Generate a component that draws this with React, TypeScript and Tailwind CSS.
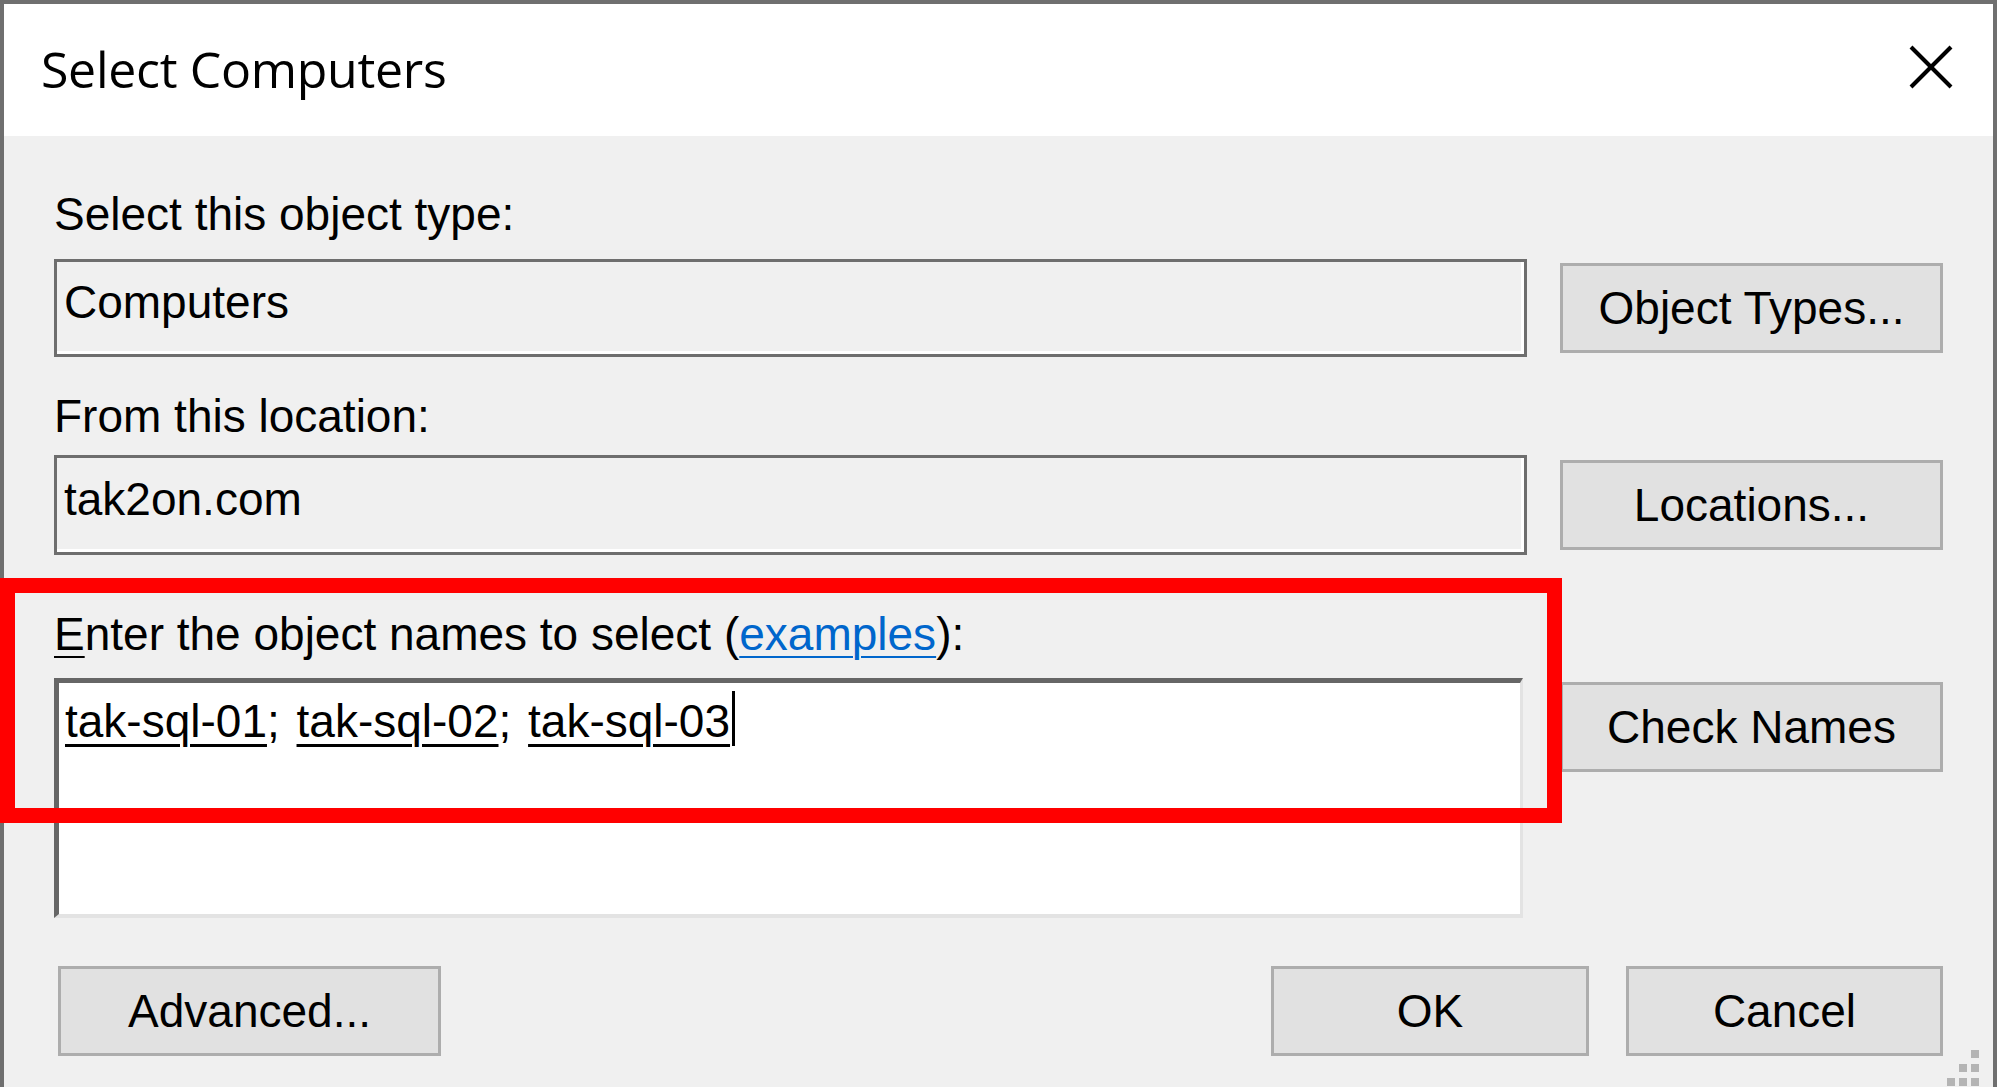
import React from "react";

const body = "font-['Liberation_Sans',Arial,sans-serif] text-[46px] leading-[53px] text-black";

function Btn({ label, className = "" }: { label: string; className?: string }) {
  return (
    <div
      className={`h-[90px] bg-[#e1e1e1] border-[3px] border-[#adadad] flex items-center justify-center ${body} ${className}`}
    >
      <span>{label}</span>
    </div>
  );
}

function SunkenField({ text, pt }: { text: string; pt: string }) {
  return (
    <div className="w-[1473px] border-[3px] border-[#6e6e6e] bg-[#f0f0f0]">
      <div className={`h-full border-r-[3px] border-b-[3px] border-white pl-[7px] ${pt} ${body}`}>
        {text}
      </div>
    </div>
  );
}

export default function App() {
  return (
    <div className="relative w-[2000px] h-[1087px] bg-white overflow-hidden">
      <div className="w-[1997px] h-[1100px] border-l-[4px] border-t-[4px] border-r-[4px] border-[#6f6f6f] flex flex-col">
        {/* Title bar */}
        <div className="h-[132px] bg-white flex items-start shrink-0">
          <div className="pl-[37px] pt-[31px] font-['Open_Sans','Noto_Sans',sans-serif] text-[50px] leading-[68px] tracking-[-0.3px] text-black">
            Select Computers
          </div>
          <div className="ml-auto mr-[40px] mt-[41px]">
            <svg width="44" height="44" viewBox="0 0 44 44">
              <line x1="2" y1="2" x2="42" y2="42" stroke="#000" strokeWidth="4" />
              <line x1="42" y1="2" x2="2" y2="42" stroke="#000" strokeWidth="4" />
            </svg>
          </div>
        </div>

        {/* Body */}
        <div className="flex-1 bg-[#f0f0f0] pl-[50px] pr-[50px] flex flex-col">
          <div className={`mt-[52px] ${body}`}>Select this object type:</div>

          <div className="mt-[18px] flex items-center">
            <div className="h-[98px] flex">
              <SunkenField text="Computers" pt="pt-[14px]" />
            </div>
            <Btn label="Object Types..." className="ml-auto w-[383px] h-[89px]" />
          </div>

          <div className={`mt-[33px] ${body}`}>From this location:</div>

          <div className="mt-[12px] flex items-center">
            <div className="h-[100px] flex">
              <SunkenField text="tak2on.com" pt="pt-[15px]" />
            </div>
            <Btn label="Locations..." className="ml-auto w-[383px] h-[89px]" />
          </div>

          <div className={`mt-[53px] ${body}`}>
            <span className="underline decoration-[2px] underline-offset-[6px]">E</span>nter the object
            names to select (
            <span className="text-[#0066cc] underline decoration-[2px] underline-offset-[6px]">examples</span>
            ):
          </div>

          <div className="mt-[17px] flex items-start">
            <div className="w-[1469px] h-[240px] bg-white border-t-[5px] border-l-[5px] border-t-[#666666] border-l-[#666666] border-r-[3px] border-b-[4px] border-r-[#e3e3e3] border-b-[#e3e3e3] pl-[6px] pt-[12px]">
              <div className={`${body} flex items-start h-[53px]`}>
                <span className="underline decoration-[3px] underline-offset-[7px]">tak-sql-01</span>
                <span className="pr-[4px]">;&nbsp;</span>
                <span className="underline decoration-[3px] underline-offset-[7px]">tak-sql-02</span>
                <span className="pr-[4px]">;&nbsp;</span>
                <span className="underline decoration-[3px] underline-offset-[7px]">tak-sql-03</span>
                <span className="block w-[3px] h-[55px] bg-black ml-[2px] -mt-[4px]" />
              </div>
            </div>
            <Btn label="Check Names" className="ml-auto mt-[4px] w-[383px]" />
          </div>

          <div className="mt-[48px] flex items-start">
            <Btn label="Advanced..." className="ml-[4px] w-[383px]" />
            <Btn label="OK" className="ml-auto w-[318px]" />
            <Btn label="Cancel" className="ml-[37px] w-[317px]" />
          </div>
        </div>
      </div>

      {/* Red highlight annotation */}
      <div className="absolute left-0 top-[578px] w-[1562px] h-[245px] border-[15px] border-[#ff0000]" />

      {/* Resize grip */}
      <div className="absolute left-[1971px] top-[1050px] w-[8px] h-[8px] bg-[#b4b4b4]" />
      <div className="absolute left-[1959px] top-[1064px] w-[8px] h-[8px] bg-[#b4b4b4]" />
      <div className="absolute left-[1971px] top-[1064px] w-[8px] h-[8px] bg-[#b4b4b4]" />
      <div className="absolute left-[1947px] top-[1078px] w-[8px] h-[8px] bg-[#b4b4b4]" />
      <div className="absolute left-[1959px] top-[1078px] w-[8px] h-[8px] bg-[#b4b4b4]" />
      <div className="absolute left-[1971px] top-[1078px] w-[8px] h-[8px] bg-[#b4b4b4]" />
    </div>
  );
}
